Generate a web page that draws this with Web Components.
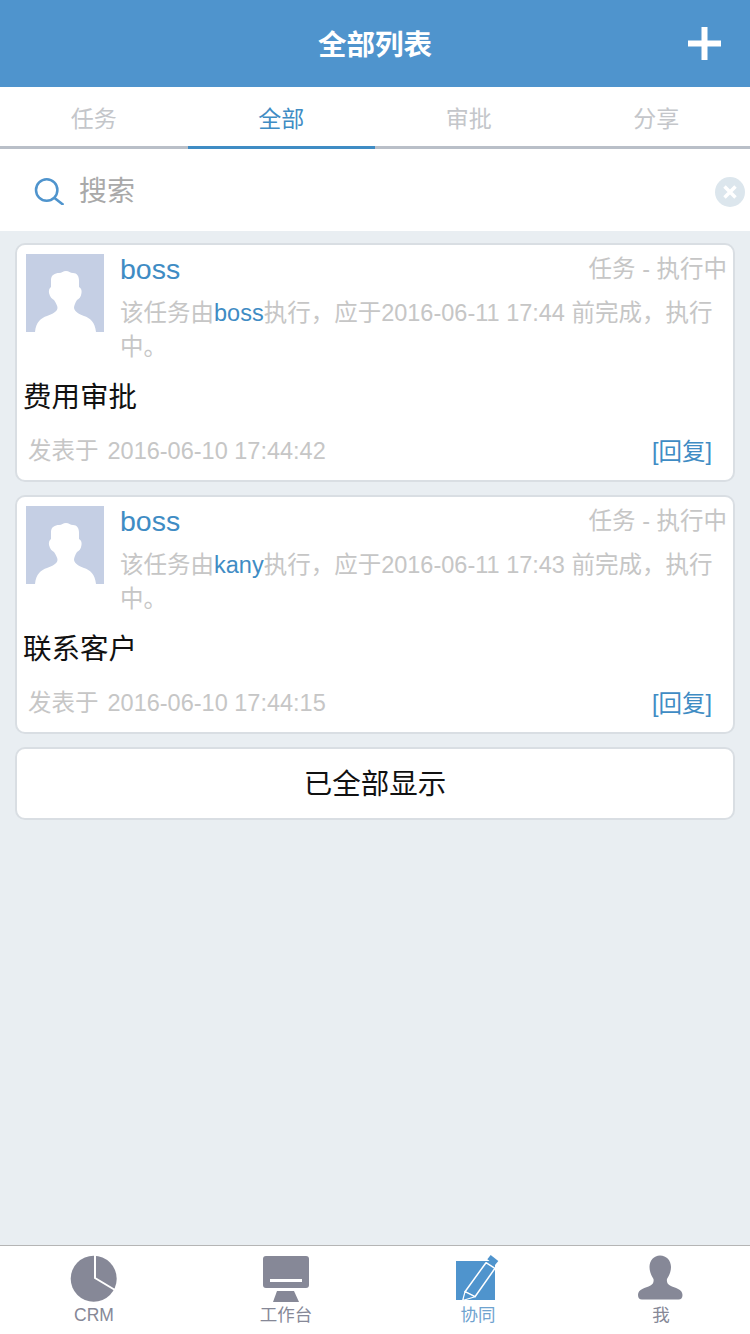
<!DOCTYPE html>
<html lang="zh">
<head>
<meta charset="utf-8">
<title>全部列表</title>
<style>
  html, body { margin: 0; padding: 0; }
  body {
    width: 750px;
    height: 1334px;
    overflow: hidden;
    font-family: "Liberation Sans", "Noto Sans CJK SC", sans-serif;
  }
</style>
</head>
<body>
<list-page>
  <page-header slot="header" title="全部列表"></page-header>
  <tab-strip slot="header">
    <tab-item>任务</tab-item>
    <tab-item active>全部</tab-item>
    <tab-item>审批</tab-item>
    <tab-item>分享</tab-item>
  </tab-strip>
  <search-bar slot="header" placeholder="搜索"></search-bar>

  <feed-card name="boss" status="任务 - 执行中" title="费用审批" posted="2016-06-10 17:44:42">该任务由<a-link>boss</a-link>执行，应于2016-06-11 17:44 前完成，执行中。</feed-card>
  <feed-card name="boss" status="任务 - 执行中" title="联系客户" posted="2016-06-10 17:44:15">该任务由<a-link>kany</a-link>执行，应于2016-06-11 17:43 前完成，执行中。</feed-card>
  <end-note>已全部显示</end-note>

  <bottom-nav slot="footer">
    <nav-item label="CRM">
      <svg viewBox="0 0 48 48" width="48" height="48">
        <circle cx="23.700" cy="23.700" r="23" fill="#868897"/>
        <path d="M25 0V23L45 35" fill="none" stroke="#fff" stroke-width="2"/>
      </svg>
    </nav-item>
    <nav-item label="工作台">
      <svg viewBox="0 0 48 48" width="48" height="48">
        <rect x="1" y="1" width="46" height="32" rx="3" fill="#868897"/>
        <rect x="8" y="24" width="32" height="3" fill="#fff"/>
        <path d="M15 36H32L37 47H11Z" fill="#868897"/>
      </svg>
    </nav-item>
    <nav-item label="协同" active>
      <svg viewBox="0 0 48 48" width="48" height="48">
        <rect x="2" y="6" width="39" height="39" fill="#4f94cd"/>
        <path d="M11 36.700L32 7.700L41 13.300L21 41.700Z" fill="#4f94cd" stroke="#fff" stroke-width="1.500" stroke-linejoin="round"/>
        <path d="M8.700 45.500L11 36.700L21 41.700Z" fill="#4f94cd" stroke="#fff" stroke-width="1.200" stroke-linejoin="round"/>
        <path d="M36.700 0L44.300 6L41 10L33.300 4.300Z" fill="#4f94cd"/>
      </svg>
    </nav-item>
    <nav-item label="我">
      <svg viewBox="0 0 48 48" width="48" height="48">
        <path d="M23 .5C29.500 .5 34 5.500 34 12C34 17.500 31.500 21.500 30 24C29.500 27.500 30.500 29 33 30.500C38 33 45.500 34 45.500 40C45.500 43 44 44.500 41.500 44.500H5C2.500 44.500 1 43 1 40C1 34 8.500 33 13.500 30.500C16 29 17 27.500 16.500 24C15 21.500 12.500 17.500 12.500 12C12.500 5.500 17 .5 23 .5Z" fill="#868897"/>
      </svg>
    </nav-item>
  </bottom-nav>
</list-page>

<script>
const BLUE = '#4f94cd';

class ListPage extends HTMLElement {
  constructor() {
    super();
    this.attachShadow({ mode: 'open' });
    this.shadowRoot.innerHTML = `
      <style>
        :host {
          display: flex;
          flex-direction: column;
          width: 750px;
          height: 1334px;
          background: #e9eef2;
        }
        main {
          flex: 1;
          display: flex;
          flex-direction: column;
          gap: 13px;
          padding: 12px 15px 0;
        }
      </style>
      <slot name="header"></slot>
      <main><slot></slot></main>
      <slot name="footer"></slot>
    `;
  }
}
customElements.define('list-page', ListPage);

class PageHeader extends HTMLElement {
  constructor() {
    super();
    this.attachShadow({ mode: 'open' });
    this.shadowRoot.innerHTML = `
      <style>
        :host {
          display: grid;
          grid-template-columns: 1fr auto 1fr;
          align-items: center;
          height: 87px;
          background: ${BLUE};
          color: #fff;
        }
        h1 {
          grid-column: 2;
          margin: 0 0 2px;
          font-size: 28.500px;
          font-weight: 700;
        }
        svg {
          justify-self: end;
          margin-right: 29px;
        }
      </style>
      <h1></h1>
      <svg viewBox="0 0 33 33" width="33" height="33"><path d="M13.500 0H19.500V13.500H33V19.500H19.500V33H13.500V19.500H0V13.500H13.500Z" fill="#fff"/></svg>
    `;
    this.shadowRoot.querySelector('h1').textContent = this.getAttribute('title');
  }
}
customElements.define('page-header', PageHeader);

class TabStrip extends HTMLElement {
  constructor() {
    super();
    this.attachShadow({ mode: 'open' });
    this.shadowRoot.innerHTML = `
      <style>
        :host {
          display: grid;
          grid-template-columns: repeat(4, 1fr);
          height: 62px;
          background: #fff;
        }
      </style>
      <slot></slot>
    `;
  }
}
customElements.define('tab-strip', TabStrip);

class TabItem extends HTMLElement {
  constructor() {
    super();
    this.attachShadow({ mode: 'open' });
    this.shadowRoot.innerHTML = `
      <style>
        :host {
          display: flex;
          align-items: center;
          justify-content: center;
          box-sizing: border-box;
          border-bottom: 3px solid #b9bfc8;
          color: #c4c6ca;
          font-size: 23px;
        }
        :host([active]) {
          color: #3f8cc4;
          border-bottom-color: #3f8cc4;
        }
      </style>
      <slot></slot>
    `;
  }
}
customElements.define('tab-item', TabItem);

class SearchBar extends HTMLElement {
  constructor() {
    super();
    this.attachShadow({ mode: 'open' });
    this.shadowRoot.innerHTML = `
      <style>
        :host {
          display: flex;
          align-items: center;
          height: 82px;
          background: #fff;
          padding: 0 5px 0 34px;
          color: #a9a9a9;
          font-size: 28px;
        }
        .text { flex: 1; margin: 0 0 2px 15px; }
        .clear { margin-top: 3px; }
      </style>
      <svg viewBox="0 0 30 30" width="30" height="30">
        <circle cx="12.700" cy="15" r="10.700" fill="none" stroke="#4f94cd" stroke-width="2.500"/>
        <path d="M20.500 23L29.500 30" stroke="#4f94cd" stroke-width="2.500" fill="none"/>
      </svg>
      <span class="text"></span>
      <svg class="clear" viewBox="0 0 30 30" width="30" height="30">
        <circle cx="15" cy="15" r="15" fill="#dce6ed"/>
        <path d="M9.500 9.500L20.500 20.500M20.500 9.500L9.500 20.500" stroke="#fff" stroke-width="3.500"/>
      </svg>
    `;
    this.shadowRoot.querySelector('.text').textContent = this.getAttribute('placeholder');
  }
}
customElements.define('search-bar', SearchBar);

class FeedCard extends HTMLElement {
  constructor() {
    super();
    this.attachShadow({ mode: 'open' });
    this.shadowRoot.innerHTML = `
      <style>
        :host {
          display: block;
          box-sizing: border-box;
          height: 239px;
          background: #fff;
          border: 2px solid #d9dee3;
          border-radius: 10px;
          color: #c6c6c6;
          font-size: 23.500px;
        }
        .head {
          display: flex;
          padding: 9px 6px 0 9px;
          gap: 16px;
        }
        .avatar { flex: none; display: block; }
        .meta { flex: 1; min-width: 0; }
        .top {
          display: flex;
          justify-content: space-between;
          height: 42px;
          margin-top: -9px;
          padding-top: 2px;
        }
        .name { color: #3f8cc4; font-size: 28.500px; line-height: 44px; }
        .status { line-height: 44px; }
        .desc {
          margin-top: 7px;
          line-height: 34px;
        }
        h2 {
          margin: 11px 0 0 6px;
          color: #111;
          font-size: 28.500px;
          font-weight: 400;
          line-height: 44px;
        }
        .foot {
          display: flex;
          justify-content: space-between;
          margin-top: 14px;
          padding: 0 21px 0 11px;
          line-height: 36px;
        }
        .prefix { margin-right: 9px; }
        .reply { color: #3f8cc4; margin-top: 1px; }
      </style>
      <div class="head">
        <svg class="avatar" viewBox="0 0 78 78" width="78" height="78">
          <rect width="78" height="78" fill="#c5cfe4"/>
          <path d="M40 17C43 17 44 19 47 19C51 19 53 22 53 27L53 33C55 34 56 36 55.500 39C55 43 53 45 51 46C49 49 48 52 48 54C49 58 53 60 58 62C64 64 69 68 70 78H9C10 68 15 64 21 62C26 60 31 58 31.500 54C31.500 52 30 49 28 46C26 45 24 43 23 39C22.500 36 23.500 34 25 33L25 26C25 21 29 19 33 19C36 19 37 17 40 17Z" fill="#fff"/>
        </svg>
        <div class="meta">
          <div class="top"><span class="name"></span><span class="status"></span></div>
          <div class="desc"><slot></slot></div>
        </div>
      </div>
      <h2></h2>
      <div class="foot"><span><span class="prefix">发表于</span><span class="posted"></span></span><span class="reply">[回复]</span></div>
    `;
    const root = this.shadowRoot;
    root.querySelector('.name').textContent = this.getAttribute('name');
    root.querySelector('.status').textContent = this.getAttribute('status');
    root.querySelector('h2').textContent = this.getAttribute('title');
    root.querySelector('.posted').textContent = this.getAttribute('posted');
  }
}
customElements.define('feed-card', FeedCard);

class ALink extends HTMLElement {
  constructor() {
    super();
    this.attachShadow({ mode: 'open' });
    this.shadowRoot.innerHTML = '<style>:host { display: inline; color: #3f8cc4; }</style><slot></slot>';
  }
}
customElements.define('a-link', ALink);

class EndNote extends HTMLElement {
  constructor() {
    super();
    this.attachShadow({ mode: 'open' });
    this.shadowRoot.innerHTML = `
      <style>
        :host {
          display: flex;
          align-items: center;
          justify-content: center;
          box-sizing: border-box;
          height: 73px;
          padding-bottom: 4px;
          background: #fff;
          border: 2px solid #d9dee3;
          border-radius: 10px;
          color: #111;
          font-size: 28.500px;
        }
      </style>
      <slot></slot>
    `;
  }
}
customElements.define('end-note', EndNote);

class BottomNav extends HTMLElement {
  constructor() {
    super();
    this.attachShadow({ mode: 'open' });
    this.shadowRoot.innerHTML = `
      <style>
        :host {
          display: grid;
          grid-template-columns: 188px 196px 188px 178px;
          box-sizing: border-box;
          height: 89px;
          background: #fff;
          border-top: 1px solid #b5b5b5;
        }
      </style>
      <slot></slot>
    `;
  }
}
customElements.define('bottom-nav', BottomNav);

class NavItem extends HTMLElement {
  constructor() {
    super();
    this.attachShadow({ mode: 'open' });
    this.shadowRoot.innerHTML = `
      <style>
        :host {
          display: flex;
          flex-direction: column;
          align-items: center;
          color: #868897;
          font-size: 17.500px;
        }
        :host([active]) { color: #6fa3cf; }
        .icon { height: 48px; margin-top: 9px; line-height: 0; }
        .label { line-height: 22px; margin-top: 1px; }
      </style>
      <div class="icon"><slot></slot></div>
      <div class="label"></div>
    `;
    this.shadowRoot.querySelector('.label').textContent = this.getAttribute('label');
  }
}
customElements.define('nav-item', NavItem);
</script>
</body>
</html>
